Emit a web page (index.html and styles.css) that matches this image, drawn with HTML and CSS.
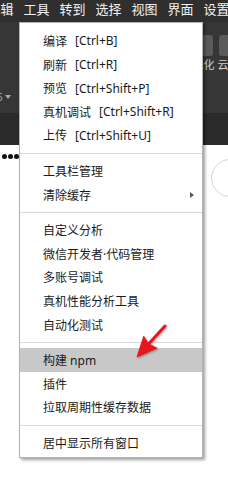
FILE: index.html
```html
<!DOCTYPE html>
<html lang="zh-CN">
<head>
<meta charset="utf-8">
<title>工具菜单</title>
<link rel="stylesheet" href="styles.css">
</head>
<body>
<div class="menubar">
  <span class="mb-item first">编辑</span>
  <span class="mb-item">工具</span>
  <span class="mb-item">转到</span>
  <span class="mb-item">选择</span>
  <span class="mb-item">视图</span>
  <span class="mb-item">界面</span>
  <span class="mb-item">设置</span>
</div>
<div class="toolbar">
  <div class="tools">
    <div class="tool"><div class="tool-btn"></div><div class="tool-label">可视化</div></div>
    <div class="tool"><div class="tool-btn"></div><div class="tool-label">云开发</div></div>
  </div>
  <div class="sel"><span class="sel-num">5</span><span class="sel-caret"></span></div>
</div>
<div class="toolbar2"></div>
<div class="content">
  <div class="dots"><span class="dot"></span><span class="dot"></span><span class="dot"></span></div>
  <div class="ring"></div>
</div>

<div class="menu">
  <div class="item">编译<span class="key">[Ctrl+B]</span></div>
  <div class="item">刷新<span class="key">[Ctrl+R]</span></div>
  <div class="item">预览<span class="key">[Ctrl+Shift+P]</span></div>
  <div class="item">真机调试<span class="key">[Ctrl+Shift+R]</span></div>
  <div class="item">上传<span class="key">[Ctrl+Shift+U]</span></div>
  <div class="sep"></div>
  <div class="item">工具栏管理</div>
  <div class="item">清除缓存<span class="sub"></span></div>
  <div class="sep"></div>
  <div class="item">自定义分析</div>
  <div class="item">微信开发者·代码管理</div>
  <div class="item">多账号调试</div>
  <div class="item">真机性能分析工具</div>
  <div class="item">自动化测试</div>
  <div class="sep"></div>
  <div class="item active">构建 npm</div>
  <div class="item">插件</div>
  <div class="item">拉取周期性缓存数据</div>
  <div class="sep"></div>
  <div class="item">居中显示所有窗口</div>
</div>

<svg class="arrow" width="228" height="491" viewBox="0 0 228 491">
  <defs>
    <filter id="sh" x="-20%" y="-20%" width="140%" height="140%">
      <feDropShadow dx="1" dy="1" stdDeviation="1" flood-color="#000" flood-opacity="0.35"/>
    </filter>
  </defs>
  <g filter="url(#sh)" fill="#e5141c" stroke="#e5141c">
    <line x1="165" y1="326" x2="149" y2="343.5" stroke-width="3" stroke-linecap="round"/>
    <polygon points="137,357 143.7,336.2 148.6,343.8 157.1,348.2" stroke-width="0.8" stroke-linejoin="round"/>
  </g>
</svg>
</body>
</html>
```

FILE: styles.css
```css
* { box-sizing: border-box; }
html, body {
  margin: 0;
  padding: 0;
  width: 228px;
  height: 491px;
  overflow: hidden;
  background: #ffffff;
  font-family: "Noto Sans", "Noto Sans CJK SC", sans-serif;
}
.menubar {
  height: 22px;
  background: #2f2f2f;
  display: flex;
  gap: 10px;
  white-space: nowrap;
}
.mb-item {
  font-family: "Noto Sans CJK SC", sans-serif;
  font-size: 13px;
  line-height: 17px;
  color: #f2f2f2;
  flex: none;
}
.mb-item.first { margin-left: -12.5px; }

.toolbar {
  height: 91px;
  background: #363636;
  display: flex;
  flex-direction: column;
  overflow: hidden;
}
.tools {
  display: flex;
  padding: 13px 0 0 180px;
  width: 300px;
}
.tool {
  width: 36px;
  flex: none;
  display: flex;
  flex-direction: column;
  align-items: center;
}
.tool-btn {
  width: 30px;
  height: 21px;
  border-radius: 3px;
  background: #5a5a5a;
}
.tool-label {
  margin-top: 1px;
  font-family: "Noto Sans CJK SC", sans-serif;
  font-size: 11px;
  line-height: 14px;
  color: #d0d0d0;
  white-space: nowrap;
}
.sel {
  margin-top: 20px;
  margin-left: -3px;
  display: flex;
  align-items: center;
  gap: 2px;
  height: 12px;
}
.sel-num {
  font-size: 10px;
  line-height: 12px;
  color: #a8a8a8;
}
.sel-caret {
  width: 0;
  height: 0;
  border-left: 3px solid transparent;
  border-right: 3px solid transparent;
  border-top: 4px solid #a8a8a8;
}
.toolbar2 {
  height: 32px;
  background: #2a2a2a;
}
.content {
  position: relative;
  height: 346px;
  display: flex;
  justify-content: space-between;
  align-items: flex-start;
}
.dots {
  display: flex;
  gap: 1px;
  padding: 9px 0 0 2px;
}
.dot {
  width: 5px;
  height: 5px;
  border-radius: 50%;
  background: #111;
}
.ring {
  width: 38px;
  height: 38px;
  margin: 14px -21px 0 0;
  border: 1px solid #d6d6d6;
  border-radius: 50%;
}

.menu {
  position: absolute;
  left: 19px;
  top: 22px;
  width: 184px;
  padding: 6.2px 0 2px;
  background: #ffffff;
  border: 1px solid #b4b4b4;
  box-shadow: 2px 2px 3px rgba(0, 0, 0, 0.38);
  font-family: "Noto Sans", "Noto Sans CJK SC", sans-serif;
}
.item {
  height: 23.6px;
  display: flex;
  align-items: center;
  padding: 0 8px 0 23px;
  font-size: 12px;
  color: #1a1a1a;
  white-space: nowrap;
}
.item.active { background: #c8c8c8; }
.key { margin-left: 8px; }
.sub {
  margin-left: auto;
  width: 0;
  height: 0;
  border-top: 3.5px solid transparent;
  border-bottom: 3.5px solid transparent;
  border-left: 4px solid #5a5a5a;
}
.sep {
  height: 1px;
  margin: 5.5px 0;
  background: #d9d9d9;
}
.arrow {
  position: absolute;
  left: 0;
  top: 0;
  pointer-events: none;
}
```
